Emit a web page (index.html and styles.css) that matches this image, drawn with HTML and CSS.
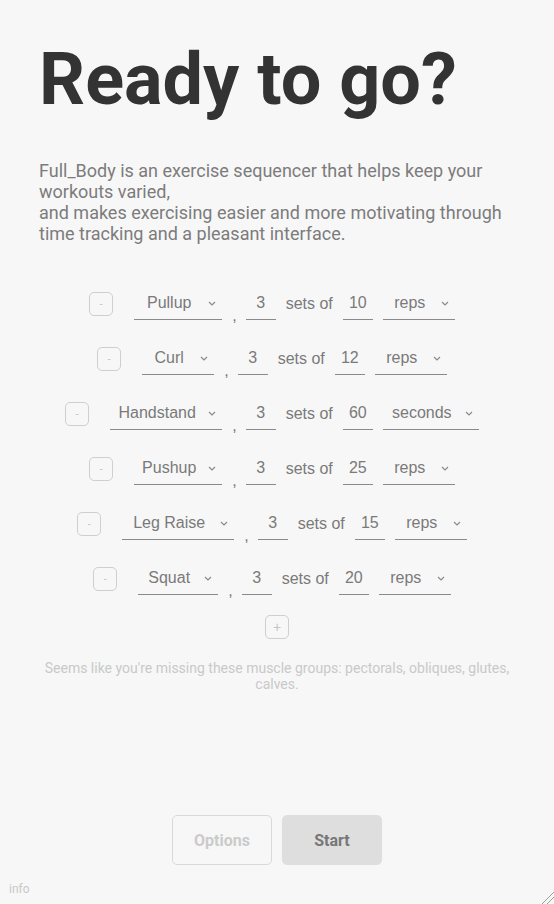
FILE: index.html
```html
<!DOCTYPE html>
<html lang="en">
<head>
<meta charset="utf-8">
<title>Ready to go?</title>
<link rel="stylesheet" href="styles.css">
</head>
<body>
<div class="app">
  <h1 class="title">Ready to go?</h1>
  <p class="intro">Full_Body is an exercise sequencer that helps keep your workouts varied,<br>and makes exercising easier and more motivating through time tracking and a pleasant interface.</p>

  <div class="list">
    <div class="row">
      <button class="sq-btn minus">-</button>
      <div class="select" style="width:88px"><span>Pullup</span><svg class="chev" viewBox="0 0 8 5" width="8" height="5"><path d="M1 1l3 3 3-3"/></svg></div>
      <span class="comma">,</span>
      <div class="num">3</div>
      <span class="label">sets of</span>
      <div class="num">10</div>
      <div class="select unit" style="width:72px"><span>reps</span><svg class="chev" viewBox="0 0 8 5" width="8" height="5"><path d="M1 1l3 3 3-3"/></svg></div>
    </div>
    <div class="row">
      <button class="sq-btn minus">-</button>
      <div class="select" style="width:72px"><span>Curl</span><svg class="chev" viewBox="0 0 8 5" width="8" height="5"><path d="M1 1l3 3 3-3"/></svg></div>
      <span class="comma">,</span>
      <div class="num">3</div>
      <span class="label">sets of</span>
      <div class="num">12</div>
      <div class="select unit" style="width:72px"><span>reps</span><svg class="chev" viewBox="0 0 8 5" width="8" height="5"><path d="M1 1l3 3 3-3"/></svg></div>
    </div>
    <div class="row">
      <button class="sq-btn minus">-</button>
      <div class="select" style="width:112px"><span>Handstand</span><svg class="chev" viewBox="0 0 8 5" width="8" height="5"><path d="M1 1l3 3 3-3"/></svg></div>
      <span class="comma">,</span>
      <div class="num">3</div>
      <span class="label">sets of</span>
      <div class="num">60</div>
      <div class="select unit" style="width:96px"><span>seconds</span><svg class="chev" viewBox="0 0 8 5" width="8" height="5"><path d="M1 1l3 3 3-3"/></svg></div>
    </div>
    <div class="row">
      <button class="sq-btn minus">-</button>
      <div class="select" style="width:88px"><span>Pushup</span><svg class="chev" viewBox="0 0 8 5" width="8" height="5"><path d="M1 1l3 3 3-3"/></svg></div>
      <span class="comma">,</span>
      <div class="num">3</div>
      <span class="label">sets of</span>
      <div class="num">25</div>
      <div class="select unit" style="width:72px"><span>reps</span><svg class="chev" viewBox="0 0 8 5" width="8" height="5"><path d="M1 1l3 3 3-3"/></svg></div>
    </div>
    <div class="row">
      <button class="sq-btn minus">-</button>
      <div class="select" style="width:112px"><span>Leg Raise</span><svg class="chev" viewBox="0 0 8 5" width="8" height="5"><path d="M1 1l3 3 3-3"/></svg></div>
      <span class="comma">,</span>
      <div class="num">3</div>
      <span class="label">sets of</span>
      <div class="num">15</div>
      <div class="select unit" style="width:72px"><span>reps</span><svg class="chev" viewBox="0 0 8 5" width="8" height="5"><path d="M1 1l3 3 3-3"/></svg></div>
    </div>
    <div class="row">
      <button class="sq-btn minus">-</button>
      <div class="select" style="width:80px"><span>Squat</span><svg class="chev" viewBox="0 0 8 5" width="8" height="5"><path d="M1 1l3 3 3-3"/></svg></div>
      <span class="comma">,</span>
      <div class="num">3</div>
      <span class="label">sets of</span>
      <div class="num">20</div>
      <div class="select unit" style="width:72px"><span>reps</span><svg class="chev" viewBox="0 0 8 5" width="8" height="5"><path d="M1 1l3 3 3-3"/></svg></div>
    </div>
  </div>

  <div class="add-wrap"><button class="sq-btn plus">+</button></div>

  <p class="missing">Seems like you're missing these muscle groups: pectorals, obliques, glutes, calves.</p>

  <div class="actions">
    <button class="btn btn-outline">Options</button>
    <button class="btn btn-fill">Start</button>
  </div>

  <span class="info">info</span>
  <svg class="grip" width="14" height="14" viewBox="0 0 14 14"><path d="M2 14L14 2M7 14L14 7"/></svg>
</div>
</body>
</html>
```

FILE: styles.css
```css
* { box-sizing: border-box; }

html, body {
  margin: 0;
  padding: 0;
  background: #f7f7f7;
}

.app {
  position: relative;
  width: 554px;
  height: 904px;
  padding: 0 39px 39px;
  display: flex;
  flex-direction: column;
  font-family: Roboto, "Liberation Sans", sans-serif;
  overflow: hidden;
}

.title {
  margin: 44px 0 0;
  font-size: 72px;
  line-height: 72px;
  font-weight: 700;
  color: #333333;
}

.intro {
  margin: 44px 0 0;
  font-size: 18px;
  line-height: 21px;
  color: #7c7c7c;
}

.list {
  margin-top: 43px;
  display: flex;
  flex-direction: column;
  gap: 22px;
}

.row {
  display: flex;
  align-items: center;
  justify-content: center;
  height: 33px;
  gap: 10px;
  font-family: "Liberation Sans", Arial, sans-serif;
  font-size: 16px;
  color: #7a7a7a;
}

.sq-btn {
  width: 24px;
  height: 24px;
  padding: 0;
  border: 1px solid #cfcfcf;
  border-radius: 5px;
  background: transparent;
  color: #c4c4c4;
  font-family: "Liberation Sans", Arial, sans-serif;
  line-height: 20px;
  text-align: center;
}

.minus {
  font-size: 10px;
  margin-right: 11px;
}

.plus {
  font-size: 14px;
}

.select {
  flex: none;
  height: 33px;
  display: flex;
  align-items: center;
  padding: 0 6px 0 0;
  border-bottom: 1px solid #8a8a8a;
  white-space: nowrap;
}

.select span {
  flex: 1;
  text-align: center;
  margin-right: 4px;
}

.select.unit {
  margin-right: 10px;
}

.chev {
  display: block;
  flex: none;
  fill: none;
  stroke: #8a8a8a;
  stroke-width: 1.2;
  margin-top: 1px;
}

.comma {
  line-height: 18px;
  margin-top: 24px;
  margin-right: -1px;
}

.num {
  flex: none;
  width: 30px;
  height: 33px;
  display: flex;
  align-items: center;
  justify-content: center;
  border-bottom: 1px solid #8a8a8a;
}

.label {
  white-space: nowrap;
}

.add-wrap {
  margin-top: 20px;
  display: flex;
  justify-content: center;
}

.missing {
  margin: 21px 0 0;
  font-size: 14px;
  line-height: 16px;
  color: #c9c9c9;
  text-align: center;
}

.actions {
  margin-top: auto;
  display: flex;
  justify-content: center;
  gap: 10px;
}

.btn {
  width: 100px;
  height: 50px;
  border-radius: 5px;
  font-family: Roboto, "Liberation Sans", sans-serif;
  font-size: 16px;
  font-weight: 700;
}

.btn-outline {
  background: transparent;
  border: 1px solid #d9d9d9;
  color: #cbcbcb;
}

.btn-fill {
  background: #dedede;
  border: 1px solid #dedede;
  color: #777777;
}

.info {
  position: absolute;
  left: 9px;
  bottom: 8px;
  font-size: 12px;
  color: #c9c9c9;
}

.grip {
  position: absolute;
  right: 0;
  bottom: 0;
  fill: none;
  stroke: #a0a0a0;
  stroke-width: 1;
}
```
